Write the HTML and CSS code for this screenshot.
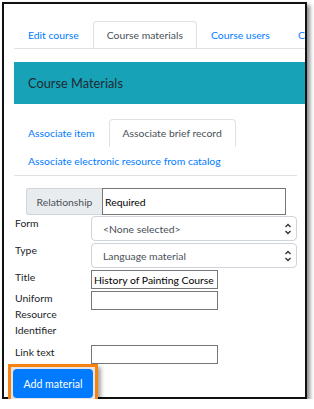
FILE: index.html
```html
<!DOCTYPE html>
<html lang="en">
  <head>
    <title>Course materials</title>
    <link rel="stylesheet" href="styles.css">
  </head>

  <body>
    <div class="frame">
      <ul class="tabs">
        <li><a href="#">Edit course</a></li>
        <li class="active"><a href="#">Course materials</a></li>
        <li><a href="#">Course users</a></li>
        <li><a href="#">Course reserves</a></li>
      </ul>

      <div class="header">Course Materials</div>

      <ul class="subtabs">
        <li><a href="#">Associate item</a></li>
        <li class="active"><a href="#">Associate brief record</a></li>
        <li><a href="#">Associate electronic resource from catalog</a></li>
      </ul>
      <div class="rule"></div>

      <div class="group">
        <span class="group-label">Relationship</span>
        <input class="group-input" type="text" value="Required">
      </div>

      <div class="row">
        <label>Form</label>
        <div class="select">
          <span>&lt;None selected&gt;</span>
          <svg width="8" height="14" viewBox="0 0 8 14">
            <path d="M1.5 5 L4 2.5 L6.5 5 M1.5 9 L4 11.5 L6.5 9" fill="none" stroke="#333" stroke-width="1.4"/>
          </svg>
        </div>
      </div>
      <div class="row">
        <label>Type</label>
        <div class="select">
          <span>Language material</span>
          <svg width="8" height="14" viewBox="0 0 8 14">
            <path d="M1.5 5 L4 2.5 L6.5 5 M1.5 9 L4 11.5 L6.5 9" fill="none" stroke="#333" stroke-width="1.4"/>
          </svg>
        </div>
      </div>
      <div class="row">
        <label>Title</label>
        <input class="field" type="text" value="History of Painting Course">
      </div>
      <div class="row uri">
        <label>Uniform<br>Resource<br>Identifier</label>
        <input class="field" type="text">
      </div>
      <div class="row">
        <label>Link text</label>
        <input class="field" type="text">
      </div>

      <span class="highlight"><button class="submit">Add material</button></span>
    </div>
  </body>
</html>
```

FILE: styles.css
```css
body {
  margin: 0;
  background-color: white;
  font-family: Lato, "Noto Sans", sans-serif;
  font-size: 10.4px;
  color: #212529;
}

.frame {
  margin: 2px 0 0 2px;
  width: 291px;
  height: 393px;
  border: 2px solid #111;
  box-shadow: 3px 3px 4px rgba(0, 0, 0, 0.45);
  padding-left: 10px;
}

a {
  color: #007bff;
  text-decoration: none;
}

/* main tabs */
.tabs {
  list-style: none;
  display: flex;
  margin: 17px 0 0 0;
  padding: 0;
  border-bottom: 1px solid #dee2e6;
  white-space: nowrap;
  overflow: hidden;
}

.tabs li {
  margin-bottom: -1px;
}

.tabs a {
  display: block;
  padding: 6px 13px;
  line-height: 14px;
  border: 1px solid transparent;
  border-radius: 4px 4px 0 0;
}

.tabs .active a,
.subtabs .active a {
  color: #495057;
  border-color: #dee2e6 #dee2e6 white;
  background-color: white;
}

.header {
  margin-top: 13px;
  height: 42px;
  line-height: 42px;
  padding-left: 14px;
  background-color: #17a2b8;
  font-size: 12.8px;
  color: #1d2b30;
}

/* sub tabs */
.subtabs {
  list-style: none;
  display: flex;
  flex-wrap: wrap;
  margin: 15px 0 0 0;
  padding: 0;
}

.subtabs a {
  display: block;
  padding: 6px 13px;
  line-height: 14px;
  border: 1px solid transparent;
  border-radius: 4px 4px 0 0;
}

.rule {
  margin-right: 8px;
  border-top: 1px solid #dee2e6;
}

/* relationship */
.group {
  display: flex;
  margin: 12px 0 1px 12px;
  height: 27px;
}

.group-label {
  width: 75px;
  display: flex;
  align-items: center;
  justify-content: center;
  background-color: #e9ecef;
  border: 1px solid #ced4da;
  border-right: none;
  border-radius: 3px 0 0 3px;
  color: #495057;
}

.group-input {
  width: 184px;
  box-sizing: border-box;
  border: 1px solid #767676;
  margin: 0;
  padding: 0 2px;
  font: inherit;
  color: #000;
}

/* form rows */
.row {
  display: flex;
  align-items: flex-start;
  margin-bottom: 2px;
}

.row label {
  width: 76px;
  padding-left: 1px;
  line-height: 16px;
  margin-top: -1px;
}

.select {
  width: 206px;
  height: 25px;
  box-sizing: border-box;
  display: flex;
  align-items: center;
  justify-content: space-between;
  padding: 0 4px 0 11px;
  border: 1px solid #ced4da;
  border-radius: 4px;
  color: #495057;
}

.field {
  width: 127px;
  height: 19px;
  box-sizing: border-box;
  margin: 0;
  padding: 0 2px;
  border: 1px solid #767676;
  font: inherit;
  color: #000;
}

.row.uri {
  margin-top: 1px;
  margin-bottom: 7px;
}

.highlight {
  display: inline-block;
  margin: -2px 0 0 -6px;
  padding: 2px;
  border: 3px solid #f7820f;
  background-color: #e4e4e4;
  box-shadow: 3px 3px 4px rgba(0, 0, 0, 0.35);
}

.submit {
  display: block;
  width: 80px;
  height: 29px;
  padding: 0;
  border: none;
  border-radius: 4px;
  background-color: #007bff;
  color: white;
  font: inherit;
  font-size: 10.6px;
  white-space: nowrap;
}
```
